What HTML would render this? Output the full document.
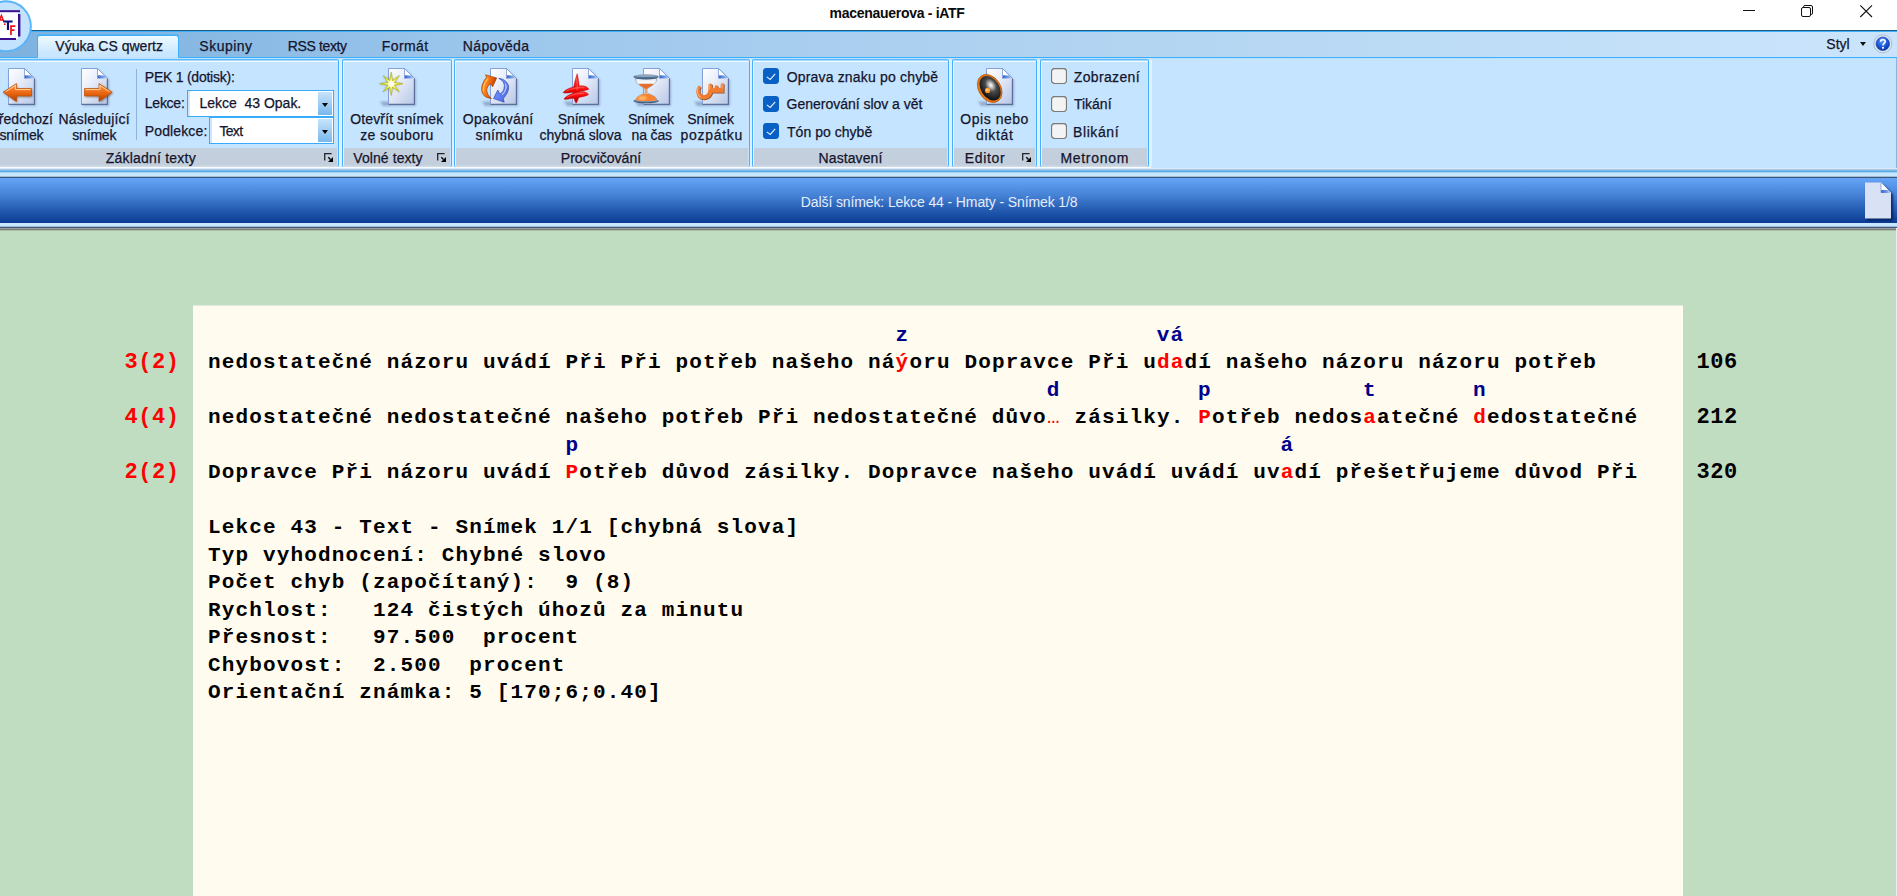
<!DOCTYPE html>
<html lang="cs">
<head>
<meta charset="utf-8">
<title>macenauerova - iATF</title>
<style>
html,body{margin:0;padding:0;}
body{width:1897px;height:896px;overflow:hidden;position:relative;background:#c0ddc1;font-family:"Liberation Sans",sans-serif;font-size:13px;color:#14142c;}
.abs{position:absolute;}
.t{position:absolute;white-space:nowrap;line-height:16px;height:16px;font-size:14px;-webkit-text-stroke:0.25px currentColor;}
.c{text-align:center;}
/* title bar */
#title{left:0;top:0;width:1897px;height:30px;background:#fff;}
/* ribbon */
#l30{left:0;top:30px;width:1897px;height:1px;background:#1d5b86;}
#l31{left:0;top:31px;width:1897px;height:1px;background:#3fb0fb;}
#tabrow{left:0;top:32px;width:1897px;height:25px;background:linear-gradient(90deg,#7db2e0 0px,#86b8e3 180px,#9cc6ec 480px,#acd0f0 900px,#b8d8f3 1300px,#c6e2fa 1700px,#cae4fb 1897px);}
#l57{left:0;top:57px;width:1897px;height:1px;background:#3ab0ff;}
#panel{left:0;top:58px;width:1896px;height:111px;background:#c5e4ff;border-right:1px solid #8db6d8;}
#l58{left:0;top:58px;width:1896px;height:1px;background:#bbe1ff;}
#l167{left:0;top:167px;width:1151px;height:1px;background:#f8fcff;}
#l168{left:0;top:168px;width:1897px;height:1px;background:#d2e9fe;}
#l169{left:0;top:169px;width:1897px;height:1px;background:#b6cbdf;}
#l170{left:0;top:170px;width:1897px;height:1px;background:#7cb6e5;}
#l171{left:0;top:171px;width:1897px;height:1px;background:#5aaee8;}
#l172{left:0;top:172px;width:1897px;height:5px;background:linear-gradient(180deg,#a4d2f6 0,#a4d2f6 1px,#c8e6ff 1px,#c8e6ff 4px,#a2bad2 4px,#a2bad2 5px);}
#l177{left:0;top:177px;width:1897px;height:1px;background:#38587e;}
#bluebar{left:0;top:178px;width:1897px;height:45px;background:linear-gradient(180deg,#66a4f8 0%,#5a98ec 14%,#4480d4 40%,#2e68bc 60%,#1a50a6 82%,#0b3c92 100%);}
#l223{left:0;top:223px;width:1897px;height:4px;background:linear-gradient(180deg,#c8e6ff 0,#c8e6ff 3px,#9cb8d2 3px,#9cb8d2 4px);}
#l227{left:0;top:227px;width:1897px;height:1px;background:#3e5c7c;}
#l228{left:0;top:228px;width:1896px;height:3px;background:linear-gradient(180deg,#989898 0,#989898 1px,#7c7c7c 1px,#7c7c7c 2px,#a9bfa9 2px,#a9bfa9 3px);}
#redge{left:1896px;top:228px;width:1px;height:668px;background:#ececec;}
/* active tab */
#tab{left:37px;top:35px;width:142px;height:23px;border:1px solid #3fb0fb;border-bottom:none;border-radius:3px 3px 0 0;box-sizing:border-box;background:linear-gradient(180deg,#eefaff 0%,#e0f3ff 30%,#cde9ff 70%,#c5e4ff 100%);box-shadow:0 -1px 0 rgba(63,176,251,0.6);}
/* groups */
.grp{position:absolute;top:59px;height:108px;box-sizing:border-box;border:1px solid #44b0ff;border-top-color:#58bcff;border-bottom:none;border-radius:2px;background:#c5e4ff;box-shadow:inset 0 1px 0 #a6d8ff,inset 0 2px 0 #f2f9ff,inset 1px 0 0 #f2f9ff,3px 0 0 #e2f1ff;}
.glab{position:absolute;left:1px;right:1px;top:88px;height:19px;background:linear-gradient(180deg,#c3cfdc 0,#c3cfdc 17px,#d6e0ea 19px);}
.combo{position:absolute;box-sizing:border-box;border:1px solid #36acff;background:#fff;box-shadow:inset 2px 0 0 #cce7ff;}
.dd{position:absolute;right:1px;top:1px;bottom:1px;width:14px;background:linear-gradient(180deg,#c6e3fb 0%,#a4d0f5 45%,#78b8ec 100%);}
.dd i{position:absolute;left:3.5px;top:11px;width:0;height:0;border-left:3.5px solid transparent;border-right:3.5px solid transparent;border-top:4px solid #000;}
/* main */
#cream{left:193px;top:305px;width:1490px;height:591px;background:linear-gradient(180deg,#e0ecd9 0,#e0ecd9 1px,#fffbef 1px,#fffbef 100%);}
.m{position:absolute;white-space:pre;font-family:"Liberation Mono",monospace;font-weight:bold;font-size:21px;line-height:28px;height:28px;color:#000;letter-spacing:1.15px;}
.m.n{font-size:22px;letter-spacing:0.55px;}
.r{color:#ff0000;}
.b{color:#00008b;}
.s{font-family:"Liberation Sans",sans-serif;display:inline-block;width:13.75px;text-align:center;}
</style>
</head>
<body>
<div id="title" class="abs"></div>
<div id="l30" class="abs"></div><div id="l31" class="abs"></div>
<div id="tabrow" class="abs"></div>
<div id="l57" class="abs"></div>
<div id="panel" class="abs"></div><div id="l58" class="abs"></div>
<div id="l167" class="abs"></div><div id="l168" class="abs"></div><div id="l169" class="abs"></div>
<div id="l170" class="abs"></div><div id="l171" class="abs"></div><div id="l172" class="abs"></div><div id="l177" class="abs"></div>
<div id="bluebar" class="abs"></div>
<div id="l223" class="abs"></div><div id="l227" class="abs"></div><div id="l228" class="abs"></div><div id="redge" class="abs"></div>

<!--GROUPS-->
<svg width="0" height="0" style="position:absolute"><defs>
<linearGradient id="pg" x1="0" y1="0" x2="0.9" y2="1"><stop offset="0" stop-color="#ffffff"/><stop offset="0.4" stop-color="#e9eef9"/><stop offset="1" stop-color="#b9c9e8"/></linearGradient>
<linearGradient id="foldb" x1="0" y1="0" x2="1" y2="0"><stop offset="0" stop-color="#2f62cc"/><stop offset="0.6" stop-color="#7aa0e4"/><stop offset="1" stop-color="#c8d8f4"/></linearGradient>
<linearGradient id="fold" x1="0" y1="1" x2="1" y2="0"><stop offset="0" stop-color="#3a6ad0"/><stop offset="0.3" stop-color="#b8ccf0"/><stop offset="0.6" stop-color="#ffffff"/><stop offset="1" stop-color="#ffffff"/></linearGradient>
<linearGradient id="org" x1="0" y1="0" x2="0" y2="1"><stop offset="0" stop-color="#ffa850"/><stop offset="0.3" stop-color="#f87c24"/><stop offset="0.65" stop-color="#e05c0c"/><stop offset="1" stop-color="#a83c00"/></linearGradient>
<linearGradient id="org2" x1="0" y1="0" x2="1" y2="0.3"><stop offset="0" stop-color="#e86010"/><stop offset="0.3" stop-color="#ff8c20"/><stop offset="0.7" stop-color="#e85c08"/><stop offset="1" stop-color="#b03c00"/></linearGradient>
<linearGradient id="blu" x1="0" y1="0" x2="1" y2="1"><stop offset="0" stop-color="#7c98ff"/><stop offset="0.5" stop-color="#6484f4"/><stop offset="1" stop-color="#4460d8"/></linearGradient>
<linearGradient id="redg" x1="0" y1="0" x2="0" y2="1"><stop offset="0" stop-color="#ff4040"/><stop offset="0.5" stop-color="#ff0808"/><stop offset="1" stop-color="#c80000"/></linearGradient>
<radialGradient id="starg" cx="0.5" cy="0.5" r="0.5"><stop offset="0" stop-color="#ffffff"/><stop offset="0.25" stop-color="#ffffb0"/><stop offset="0.6" stop-color="#f4f020"/><stop offset="1" stop-color="#c8c800"/></radialGradient>
<radialGradient id="spk" cx="0.62" cy="0.42" r="0.6"><stop offset="0" stop-color="#ffffff"/><stop offset="0.18" stop-color="#c0c0c0"/><stop offset="0.45" stop-color="#484848"/><stop offset="1" stop-color="#141414"/></radialGradient>
<radialGradient id="helpg" cx="0.45" cy="0.3" r="0.75"><stop offset="0" stop-color="#5a9cf8"/><stop offset="0.5" stop-color="#1c5ce0"/><stop offset="1" stop-color="#0a2c98"/></radialGradient>
<linearGradient id="capg" x1="0" y1="0" x2="0" y2="1"><stop offset="0" stop-color="#8aa0b8"/><stop offset="0.5" stop-color="#5a7898"/><stop offset="1" stop-color="#38587c"/></linearGradient>
<filter id="sh" x="-30%" y="-30%" width="160%" height="160%"><feGaussianBlur stdDeviation="1.1"/></filter>
</defs></svg>
<div id="tab" class="abs"></div>
<div class="grp" style="left:-8px;width:347px"><div class="glab"></div></div>
<div class="t" style="left:105.86px;top:150px;letter-spacing:0.202px;">Základní texty</div>
<svg class="abs" style="left:324px;top:153px" width="10" height="10" viewBox="0 0 10 10"><path d="M0.7 7.4V0.7H7.6" fill="none" stroke="#20242c" stroke-width="1.3"/><path d="M4.3 4.3L6.5 6.5" stroke="#000" stroke-width="1.3"/><path d="M9 4V9H4Z" fill="#000"/></svg>
<div class="grp" style="left:342px;width:110px"><div class="glab"></div></div>
<div class="t" style="left:353.34px;top:150px;letter-spacing:0.073px;">Volné texty</div>
<svg class="abs" style="left:437px;top:153px" width="10" height="10" viewBox="0 0 10 10"><path d="M0.7 7.4V0.7H7.6" fill="none" stroke="#20242c" stroke-width="1.3"/><path d="M4.3 4.3L6.5 6.5" stroke="#000" stroke-width="1.3"/><path d="M9 4V9H4Z" fill="#000"/></svg>
<div class="grp" style="left:454px;width:296px"><div class="glab"></div></div>
<div class="t" style="left:560.85px;top:150px;letter-spacing:0.007px;">Procvičování</div>
<div class="grp" style="left:752px;width:197px"><div class="glab"></div></div>
<div class="t" style="left:818.55px;top:150px;letter-spacing:0.098px;">Nastavení</div>
<div class="grp" style="left:952px;width:85px"><div class="glab"></div></div>
<div class="t" style="left:964.85px;top:150px;letter-spacing:0.662px;">Editor</div>
<svg class="abs" style="left:1022px;top:153px" width="10" height="10" viewBox="0 0 10 10"><path d="M0.7 7.4V0.7H7.6" fill="none" stroke="#20242c" stroke-width="1.3"/><path d="M4.3 4.3L6.5 6.5" stroke="#000" stroke-width="1.3"/><path d="M9 4V9H4Z" fill="#000"/></svg>
<div class="grp" style="left:1040px;width:109px"><div class="glab"></div></div>
<div class="t" style="left:1060.43px;top:150px;letter-spacing:0.700px;">Metronom</div>
<svg class="abs" style="left:-6px;top:62px" width="56" height="52" viewBox="-14 -6 56 52"><path d="M1.5 2H18L28 12V38H1.5Z" fill="#506088" opacity="0.4" filter="url(#sh)"/><path d="M0.5 0.5H16.5L26.5 10.5V36.5H0.5Z" fill="url(#pg)" stroke="#86a0dc" stroke-width="1"/><path d="M26.4 10.5V36.4H0.6" fill="none" stroke="#5c6f9c" stroke-width="1.2"/><path d="M16.5 0.8V10.5H26.2Z" fill="#ffffff"/><path d="M16.5 7.2L23.2 7.4L26.2 10.5H16.5Z" fill="url(#foldb)"/><path d="M16.5 0.5V10.5M16.5 0.5L26.5 10.5" fill="none" stroke="#7c98dc" stroke-width="0.8"/><path transform="translate(0.8,1)" d="M-5 24.2L8.5 15.5V20.5H23.5V27.9H8.5V33.5Z" fill="#4a2400" opacity="0.55" filter="url(#sh)"/><path d="M-5 24.2L8.5 15.5V20.5H23.5V27.9H8.5V33.5Z" fill="url(#org)" stroke="#b85008" stroke-width="0.7"/><path d="M-2.3 23.7L7.6 17.4V21.6H22.6" fill="none" stroke="#ffe0b0" stroke-width="1" opacity="0.85"/></svg>
<svg class="abs" style="left:67px;top:62px" width="56" height="52" viewBox="-14 -6 56 52"><path d="M1.5 2H18L28 12V38H1.5Z" fill="#506088" opacity="0.4" filter="url(#sh)"/><path d="M0.5 0.5H16.5L26.5 10.5V36.5H0.5Z" fill="url(#pg)" stroke="#86a0dc" stroke-width="1"/><path d="M26.4 10.5V36.4H0.6" fill="none" stroke="#5c6f9c" stroke-width="1.2"/><path d="M16.5 0.8V10.5H26.2Z" fill="#ffffff"/><path d="M16.5 7.2L23.2 7.4L26.2 10.5H16.5Z" fill="url(#foldb)"/><path d="M16.5 0.5V10.5M16.5 0.5L26.5 10.5" fill="none" stroke="#7c98dc" stroke-width="0.8"/><path transform="translate(0.8,1)" d="M31.2 24.2L18 15.5V20.5H3.5V27.9H18V33.5Z" fill="#4a2400" opacity="0.55" filter="url(#sh)"/><path d="M31.2 24.2L18 15.5V20.5H3.5V27.9H18V33.5Z" fill="url(#org)" stroke="#b85008" stroke-width="0.7"/><path d="M4.5 21.6H18.9V17.4L28.6 23.7" fill="none" stroke="#ffe0b0" stroke-width="1" opacity="0.85"/></svg>
<div class="t" style="left:-10.65px;top:111px;letter-spacing:0.073px;">Předchozí</div>
<div class="t" style="left:-0.59px;top:127px;letter-spacing:-0.191px;">snímek</div>
<div class="t" style="left:58.45px;top:111px;letter-spacing:0.196px;">Následující</div>
<div class="t" style="left:72.31px;top:127px;letter-spacing:-0.191px;">snímek</div>
<div class="abs" style="left:136px;top:69px;width:1px;height:71px;background:#8fb4dc"></div>
<div class="t" style="left:144.85px;top:69px;letter-spacing:-0.246px;">PEK 1 (dotisk):</div>
<div class="t" style="left:144.85px;top:95px;letter-spacing:-0.264px;">Lekce:</div>
<div class="t" style="left:144.85px;top:123px;letter-spacing:0.118px;">Podlekce:</div>
<div class="combo" style="left:187px;top:90px;width:147px;height:27px"><div class="dd"><i></i></div></div>
<div class="t" style="left:199.45px;top:95px;letter-spacing:-0.009px;white-space:pre;">Lekce  43 Opak.</div>
<div class="combo" style="left:209px;top:117px;width:125px;height:27px"><div class="dd"><i></i></div></div>
<div class="t" style="left:219.48px;top:123px;letter-spacing:-0.700px;">Text</div>
<svg class="abs" style="left:374px;top:62px" width="56" height="52" viewBox="-14 -6 56 52"><path d="M-8 33.5H2V38H-5Z" fill="#4a5a80" opacity="0.4" filter="url(#sh)"/><path d="M1.5 2H18L28 12V38H1.5Z" fill="#506088" opacity="0.4" filter="url(#sh)"/><path d="M0.5 0.5H16.5L26.5 10.5V36.5H0.5Z" fill="url(#pg)" stroke="#86a0dc" stroke-width="1"/><path d="M26.4 10.5V36.4H0.6" fill="none" stroke="#5c6f9c" stroke-width="1.2"/><path d="M16.5 0.8V10.5H26.2Z" fill="#ffffff"/><path d="M16.5 7.2L23.2 7.4L26.2 10.5H16.5Z" fill="url(#foldb)"/><path d="M16.5 0.5V10.5M16.5 0.5L26.5 10.5" fill="none" stroke="#7c98dc" stroke-width="0.8"/><g transform="translate(3.2,15.8)"><path d="M0 -11.8L1.2 -2.9L8.2 -8.2L2.9 -1.2L11.8 0L2.9 1.2L8.2 8.2L1.2 2.9L0 11.8L-1.2 2.9L-8.2 8.2L-2.9 1.2L-11.8 0L-2.9 -1.2L-8.2 -8.2L-1.2 -2.9Z" fill="#3c3c10" opacity="0.55" filter="url(#sh)"/><path d="M0 -11.8L1.3 -3.1L8.2 -8.2L3.1 -1.3L11.8 0L3.1 1.3L8.2 8.2L1.3 3.1L0 11.8L-1.3 3.1L-8.2 8.2L-3.1 1.3L-11.8 0L-3.1 -1.3L-8.2 -8.2L-1.3 -3.1Z" fill="url(#starg)" stroke="#a8a800" stroke-width="0.5"/><circle r="2.6" fill="#fffff0" opacity="0.9"/></g></svg>
<div class="t" style="left:350.14px;top:111px;letter-spacing:0.156px;">Otevřít snímek</div>
<div class="t" style="left:360.13px;top:127px;letter-spacing:0.437px;">ze souboru</div>
<svg class="abs" style="left:475.5px;top:62px" width="56" height="52" viewBox="-14 -6 56 52"><path d="M-8 33.5H2V38H-5Z" fill="#4a5a80" opacity="0.4" filter="url(#sh)"/><path d="M1.5 2H18L28 12V38H1.5Z" fill="#506088" opacity="0.4" filter="url(#sh)"/><path d="M0.5 0.5H16.5L26.5 10.5V36.5H0.5Z" fill="url(#pg)" stroke="#86a0dc" stroke-width="1"/><path d="M26.4 10.5V36.4H0.6" fill="none" stroke="#5c6f9c" stroke-width="1.2"/><path d="M16.5 0.8V10.5H26.2Z" fill="#ffffff"/><path d="M16.5 7.2L23.2 7.4L26.2 10.5H16.5Z" fill="url(#foldb)"/><path d="M16.5 0.5V10.5M16.5 0.5L26.5 10.5" fill="none" stroke="#7c98dc" stroke-width="0.8"/><path d="M1.5 30.5C-3 30 -6 28.5 -7.4 25.5C-9.3 21.5 -8.6 15.5 -3.5 9.3L-4.4 6.8L6.7 9.9L2.6 18.9L0.6 15.7C-2 17.5 -3.4 20 -3.2 22.5C-3 25.5 -1.5 28 1.5 30.5Z" fill="url(#org2)" stroke="#8c3800" stroke-width="0.6"/><path d="M-6.6 23C-7 18.5 -5 14 -2.2 11" fill="none" stroke="#ffc468" stroke-width="1.4" opacity="0.85" stroke-linecap="round"/><path d="M8.7 10.3C11.5 10.6 13.6 11.5 15.1 12.8C17.6 14.8 18.8 17 18.6 19.8C18.5 22.5 17.5 25 15.6 27.6L13.4 30.6L14.2 34.2L3.5 30.5L7.8 22.1L9.9 26.1C12 24.5 13.6 22.8 13.9 20.9C14.3 19 14.5 17.5 14.2 16.3C13.7 14.6 12.8 13.2 11.6 12.2Z" fill="url(#blu)" stroke="#2840a0" stroke-width="0.6"/><path d="M15.6 16C16.6 19.5 15.4 23.5 12.6 26.4" fill="none" stroke="#cfdcff" stroke-width="1.2" opacity="0.85" stroke-linecap="round"/></svg>
<div class="t" style="left:462.64px;top:111px;letter-spacing:0.365px;">Opakování</div>
<div class="t" style="left:475.61px;top:127px;letter-spacing:0.339px;">snímku</div>
<svg class="abs" style="left:558px;top:62px" width="56" height="52" viewBox="-14 -6 56 52"><path d="M-8 33.5H2V38H-5Z" fill="#4a5a80" opacity="0.4" filter="url(#sh)"/><path d="M1.5 2H18L28 12V38H1.5Z" fill="#506088" opacity="0.4" filter="url(#sh)"/><path d="M0.5 0.5H16.5L26.5 10.5V36.5H0.5Z" fill="url(#pg)" stroke="#86a0dc" stroke-width="1"/><path d="M26.4 10.5V36.4H0.6" fill="none" stroke="#5c6f9c" stroke-width="1.2"/><path d="M16.5 0.8V10.5H26.2Z" fill="#ffffff"/><path d="M16.5 7.2L23.2 7.4L26.2 10.5H16.5Z" fill="url(#foldb)"/><path d="M16.5 0.5V10.5M16.5 0.5L26.5 10.5" fill="none" stroke="#7c98dc" stroke-width="0.8"/><g fill="url(#redg)" stroke="#b80000" stroke-width="0.5"><path d="M5.2 5.8C6.6 12 7.5 18 7.3 24C7.1 29.5 5.6 33.5 4.1 35.2C2.6 33.5 1.4 29.5 1.3 24C1.3 18 3.2 12 5.2 5.8Z"/><path d="M-9 24.6C-6 20.5 4 17.5 10 17.8C13.5 18 16 19.4 16.8 21.2C12 23.4 4 23.6 -1 24.4C-4 25 -7 25.4 -9 24.6Z"/><path d="M-8.1 31C-5 26.8 4 23.6 10 23.6C13.4 23.7 15.8 25 16.5 26.7C12 29.2 4 29.6 -1 30.6C-4 31.2 -6.5 31.6 -8.1 31Z"/></g><path d="M-5.5 23C-1 20.5 6 19.3 11.5 19.6M-4.8 29.3C0 26.6 6 25.3 11.2 25.4M4.6 10C5.2 15 5.4 19 5.2 22" fill="none" stroke="#ff7070" stroke-width="0.9" opacity="0.75" stroke-linecap="round"/></svg>
<div class="t" style="left:557.86px;top:111px;letter-spacing:-0.169px;">Snímek</div>
<div class="t" style="left:539.41px;top:127px;letter-spacing:0.034px;">chybná slova</div>
<svg class="abs" style="left:629.3px;top:62px" width="56" height="52" viewBox="-14 -6 56 52"><path d="M-8 33.5H2V38H-5Z" fill="#4a5a80" opacity="0.4" filter="url(#sh)"/><path d="M1.5 2H18L28 12V38H1.5Z" fill="#506088" opacity="0.4" filter="url(#sh)"/><path d="M0.5 0.5H16.5L26.5 10.5V36.5H0.5Z" fill="url(#pg)" stroke="#86a0dc" stroke-width="1"/><path d="M26.4 10.5V36.4H0.6" fill="none" stroke="#5c6f9c" stroke-width="1.2"/><path d="M16.5 0.8V10.5H26.2Z" fill="#ffffff"/><path d="M16.5 7.2L23.2 7.4L26.2 10.5H16.5Z" fill="url(#foldb)"/><path d="M16.5 0.5V10.5M16.5 0.5L26.5 10.5" fill="none" stroke="#7c98dc" stroke-width="0.8"/><ellipse cx="3.1" cy="33" rx="12.7" ry="2.3" fill="url(#capg)"/><path d="M-7.5 10.5C-7.5 16.5 0.2 18.6 2.1 21V24.5C0.2 26.5 -7.3 28.2 -7.3 32.2C-4 33.6 10.5 33.6 13.9 32.2C13.9 28.2 6 26.5 4 24.5V21C6 18.6 13.9 16.5 13.9 10.5Z" fill="#e4e7ee" fill-opacity="0.9" stroke="#8a94a4" stroke-width="0.7"/><path d="M-6.6 12.6H13C12.6 14 12 15 11 15.9H-4.6C-5.6 15 -6.2 14 -6.6 12.6Z" fill="#f6f7fa" opacity="0.9"/><path d="M-4.3 15.7H10.6C9 18.3 5.2 19.4 3.7 20.9H2.4C0.9 19.4 -2.8 18.3 -4.3 15.7Z" fill="#e46c2c"/><path d="M2.4 20.5H3.7V26.5H2.4Z" fill="#f09050"/><path d="M-7 32C-7 28.6 -1.5 26 3.1 25.8C7.6 26 13.6 28.6 13.6 32C10 33.4 -3.6 33.4 -7 32Z" fill="#f8822e"/><ellipse cx="-0.6" cy="30" rx="4.4" ry="1.8" fill="#ffc878" opacity="0.9" filter="url(#sh)"/><ellipse cx="3.05" cy="8.85" rx="12.7" ry="2.6" fill="url(#capg)"/><ellipse cx="3.05" cy="8" rx="11.2" ry="1.1" fill="#9cb0c6" opacity="0.8"/></svg>
<div class="t" style="left:627.96px;top:111px;letter-spacing:-0.289px;">Snímek</div>
<div class="t" style="left:631.47px;top:127px;letter-spacing:-0.122px;">na čas</div>
<svg class="abs" style="left:688.2px;top:62px" width="56" height="52" viewBox="-14 -6 56 52"><path d="M-8 33.5H2V38H-5Z" fill="#4a5a80" opacity="0.4" filter="url(#sh)"/><path d="M1.5 2H18L28 12V38H1.5Z" fill="#506088" opacity="0.4" filter="url(#sh)"/><path d="M0.5 0.5H16.5L26.5 10.5V36.5H0.5Z" fill="url(#pg)" stroke="#86a0dc" stroke-width="1"/><path d="M26.4 10.5V36.4H0.6" fill="none" stroke="#5c6f9c" stroke-width="1.2"/><path d="M16.5 0.8V10.5H26.2Z" fill="#ffffff"/><path d="M16.5 7.2L23.2 7.4L26.2 10.5H16.5Z" fill="url(#foldb)"/><path d="M16.5 0.5V10.5M16.5 0.5L26.5 10.5" fill="none" stroke="#7c98dc" stroke-width="0.8"/><path transform="translate(0.7,0.8)" d="M-3.4 17.6C-6.5 21 -6.5 27 -3 30C0 32.3 5 31.8 8 29C9.5 27.5 10 26 10.3 24.8L21.8 24.8L22 15.8C21 15 19.5 15 18.8 15.8L18.6 19.5C18 20.3 16.6 20.3 16.2 19.5L16 18C15 17 13.5 17 12.8 18L12.6 19.8C12 20.5 10.8 20.5 10.4 19.8L10.2 16.2C9 15.2 7.5 15.2 6.5 16.2L6.3 22C6.3 24.5 5 26.5 3 27C0.5 27.5 -1.6 26 -2 23.5C-2.2 21.5 -1.5 20 -0.8 19Z" fill="#7a3000" opacity="0.8"/><path d="M-3.4 17.6C-6.5 21 -6.5 27 -3 30C0 32.3 5 31.8 8 29C9.5 27.5 10 26 10.3 24.8L21.8 24.8L22 15.8C21 15 19.5 15 18.8 15.8L18.6 19.5C18 20.3 16.6 20.3 16.2 19.5L16 18C15 17 13.5 17 12.8 18L12.6 19.8C12 20.5 10.8 20.5 10.4 19.8L10.2 16.2C9 15.2 7.5 15.2 6.5 16.2L6.3 22C6.3 24.5 5 26.5 3 27C0.5 27.5 -1.6 26 -2 23.5C-2.2 21.5 -1.5 20 -0.8 19Z" fill="#f07c30"/><path d="M-4 19.5C-5.5 23 -4.5 27.5 -1.5 29.2M7.6 16.5V21M20 16.2V20" fill="none" stroke="#ffb078" stroke-width="1.1" opacity="0.8" stroke-linecap="round"/></svg>
<div class="t" style="left:687.36px;top:111px;letter-spacing:-0.169px;">Snímek</div>
<div class="t" style="left:680.55px;top:127px;letter-spacing:0.700px;">pozpátku</div>
<svg class="abs" style="left:763px;top:68px" width="16" height="16" viewBox="0 0 16 16"><rect x="0" y="0" width="16" height="16" rx="3.4" fill="#0860c4"/><path d="M3.8 8.9L7.2 11.4L12.2 5.8" fill="none" stroke="#e6f0fc" stroke-width="1.15"/></svg>
<div class="t" style="left:786.64px;top:69px;letter-spacing:0.181px;">Oprava znaku po chybě</div>
<svg class="abs" style="left:763px;top:95.5px" width="16" height="16" viewBox="0 0 16 16"><rect x="0" y="0" width="16" height="16" rx="3.4" fill="#0860c4"/><path d="M3.8 8.9L7.2 11.4L12.2 5.8" fill="none" stroke="#e6f0fc" stroke-width="1.15"/></svg>
<div class="t" style="left:786.60px;top:96px;letter-spacing:-0.019px;">Generování slov a vět</div>
<svg class="abs" style="left:763px;top:123px" width="16" height="16" viewBox="0 0 16 16"><rect x="0" y="0" width="16" height="16" rx="3.4" fill="#0860c4"/><path d="M3.8 8.9L7.2 11.4L12.2 5.8" fill="none" stroke="#e6f0fc" stroke-width="1.15"/></svg>
<div class="t" style="left:786.99px;top:124px;letter-spacing:0.037px;">Tón po chybě</div>
<svg class="abs" style="left:972px;top:62px" width="56" height="52" viewBox="-14 -6 56 52"><path d="M-8 33.5H2V38H-5Z" fill="#4a5a80" opacity="0.4" filter="url(#sh)"/><path d="M1.5 2H18L28 12V38H1.5Z" fill="#506088" opacity="0.4" filter="url(#sh)"/><path d="M0.5 0.5H16.5L26.5 10.5V36.5H0.5Z" fill="url(#pg)" stroke="#86a0dc" stroke-width="1"/><path d="M26.4 10.5V36.4H0.6" fill="none" stroke="#5c6f9c" stroke-width="1.2"/><path d="M16.5 0.8V10.5H26.2Z" fill="#ffffff"/><path d="M16.5 7.2L23.2 7.4L26.2 10.5H16.5Z" fill="url(#foldb)"/><path d="M16.5 0.5V10.5M16.5 0.5L26.5 10.5" fill="none" stroke="#7c98dc" stroke-width="0.8"/><g transform="translate(3.7,20.5) rotate(-33)"><ellipse cx="0" cy="0" rx="11" ry="15.2" fill="#e87818" stroke="#a85000" stroke-width="0.6"/><ellipse cx="0.5" cy="0" rx="9.2" ry="13.4" fill="url(#spk)"/></g><circle cx="1.6" cy="22.4" r="2.6" fill="#ff9a28"/><circle cx="1.2" cy="21.9" r="1.2" fill="#ffd080"/></svg>
<div class="t" style="left:960.34px;top:111px;letter-spacing:0.529px;">Opis nebo</div>
<div class="t" style="left:975.98px;top:127px;letter-spacing:0.700px;">diktát</div>
<svg class="abs" style="left:1051px;top:68px" width="16" height="16" viewBox="0 0 16 16"><rect x="0.5" y="0.5" width="15" height="15" rx="3.2" fill="#f3f3f3" stroke="#7a7a7a" stroke-width="1.25"/></svg>
<div class="t" style="left:1073.76px;top:69px;letter-spacing:0.347px;">Zobrazení</div>
<svg class="abs" style="left:1051px;top:95.5px" width="16" height="16" viewBox="0 0 16 16"><rect x="0.5" y="0.5" width="15" height="15" rx="3.2" fill="#f3f3f3" stroke="#7a7a7a" stroke-width="1.25"/></svg>
<div class="t" style="left:1073.89px;top:96px;letter-spacing:0.012px;">Tikání</div>
<svg class="abs" style="left:1051px;top:123px" width="16" height="16" viewBox="0 0 16 16"><rect x="0.5" y="0.5" width="15" height="15" rx="3.2" fill="#f3f3f3" stroke="#7a7a7a" stroke-width="1.25"/></svg>
<div class="t" style="left:1073.05px;top:124px;letter-spacing:0.583px;">Blikání</div>
<div class="t" style="left:55.34px;top:38px;letter-spacing:0.020px;">Výuka CS qwertz</div>
<div class="t" style="left:199.36px;top:38px;letter-spacing:0.476px;">Skupiny</div>
<div class="t" style="left:287.85px;top:38px;letter-spacing:-0.383px;">RSS texty</div>
<div class="t" style="left:381.85px;top:38px;letter-spacing:0.383px;">Formát</div>
<div class="t" style="left:462.85px;top:38px;letter-spacing:0.332px;">Nápověda</div>
<div class="t" style="left:1826.36px;top:36px;letter-spacing:-0.022px;">Styl</div>
<div class="abs" style="left:1860px;top:42px;width:0;height:0;border-left:3.5px solid transparent;border-right:3.5px solid transparent;border-top:4px solid #111"></div>
<svg class="abs" style="left:1873px;top:34px" width="20" height="20" viewBox="0 0 20 20"><circle cx="9.8" cy="9.8" r="9" fill="#dfe9f6" stroke="#9ab0d0" stroke-width="0.8"/><circle cx="9.8" cy="9.8" r="6.8" fill="url(#helpg)" stroke="#1838a0" stroke-width="0.6"/><path d="M7.6 7.8C7.6 4.9 12.2 4.9 12.2 7.6C12.2 9.4 10 9.5 10 11.5" fill="none" stroke="#fff" stroke-width="1.7"/><circle cx="10" cy="13.8" r="1.1" fill="#fff"/></svg>
<div class="t" style="left:829.58px;top:5px;letter-spacing:-0.292px;color:#0a0a0a;font-weight:bold;-webkit-text-stroke:0;">macenauerova - iATF</div>
<svg class="abs" style="left:1735px;top:0" width="150" height="30" viewBox="0 0 150 30" fill="none" stroke="#111" stroke-width="1"><path d="M8 10.5H20"/><rect x="66.5" y="7.5" width="9" height="9" rx="1.5"/><path d="M68.5 7.5V6.8Q68.5 5.5 70 5.5H76Q77.5 5.5 77.5 7V13Q77.5 14.5 76.2 14.5H75.5"/><path d="M125.3 5.3L137 17M137 5.3L125.3 17" stroke-width="1.1"/></svg>
<div class="t" style="left:800.85px;top:194px;letter-spacing:-0.117px;color:#e6edfb;-webkit-text-stroke:0;">Další snímek: Lekce 44 - Hmaty - Snímek 1/8</div>
<svg class="abs" style="left:1861px;top:179px" width="36" height="44" viewBox="-4 -3.5 36 44"><path d="M1.5 2H17.5L28 12V38H1.5Z" fill="#041a54" opacity="0.85" filter="url(#sh)"/><path d="M0 0H16L26 10.4V36H0Z" fill="#d8e2f4"/><path d="M16 0V10.4H26Z" fill="#ffffff"/><path d="M16 7.4L23.2 7.6L26 10.4H16Z" fill="url(#foldb)"/><path d="M16 0.3V10.2" stroke="#7c98d8" stroke-width="0.8"/></svg>
<svg class="abs" style="left:0;top:0" width="40" height="58" viewBox="0 0 40 58"><circle cx="6" cy="26.2" r="24.9" fill="#c3e2fe" stroke="#58b4f8" stroke-width="1.9"/><rect x="-2" y="12" width="20" height="27" fill="#fff"/><path d="M-2 11.2H20" stroke="#3a108c" stroke-width="2"/><path d="M19.2 14V36.5" stroke="#3a108c" stroke-width="2.4"/><path d="M-2 39H16" stroke="#3a108c" stroke-width="2"/><path d="M-1.2 22L1.4 15.5L4 22M-0.3 20H3.2" fill="none" stroke="#f01018" stroke-width="1.5"/><path d="M3.5 21.5H12.6M8 21.5V30" fill="none" stroke="#0a0a78" stroke-width="2.2"/><path d="M11 35V26.2H15.4M11 30.2H14.4" fill="none" stroke="#f01018" stroke-width="1.7"/><circle cx="4.8" cy="24.2" r="0.9" fill="#f01018"/></svg>
<!--MAIN-->
<div id="cream" class="abs"></div>
<!--MAINTEXT-->
<div class="m b" style="left:895.5px;top:322px">z</div>
<div class="m b" style="left:1156.75px;top:322px">vá</div>
<div class="m " style="left:208px;top:349px">nedostatečné názoru uvádí Při Při potřeb našeho ná<span class="r">ý</span>oru Dopravce Při u<span class="r">d</span><span class="r">a</span>dí našeho názoru názoru potřeb</div>
<div class="m b" style="left:1046.75px;top:377px">d</div>
<div class="m b" style="left:1198.0px;top:377px">p</div>
<div class="m b" style="left:1363.0px;top:377px">t</div>
<div class="m b" style="left:1473.0px;top:377px">n</div>
<div class="m " style="left:208px;top:404px">nedostatečné nedostatečné našeho potřeb Při nedostatečné důvo<span class="r" style="font-weight:normal">…</span> zásilky. <span class="r">P</span>otřeb nedos<span class="r">a</span>atečné <span class="r">d</span>edostatečné</div>
<div class="m b" style="left:565.5px;top:432px">p</div>
<div class="m b" style="left:1280.5px;top:432px">á</div>
<div class="m " style="left:208px;top:459px">Dopravce Při názoru uvádí <span class="r">P</span>otřeb důvod zásilky. Dopravce našeho uvádí uvádí uv<span class="r">a</span>dí přešetřujeme důvod Při</div>
<div class="m r n" style="left:124.5px;top:349px">3(2)</div>
<div class="m n" style="left:1696.5px;top:349px">106</div>
<div class="m r n" style="left:124.5px;top:404px">4(4)</div>
<div class="m n" style="left:1696.5px;top:404px">212</div>
<div class="m r n" style="left:124.5px;top:459px">2(2)</div>
<div class="m n" style="left:1696.5px;top:459px">320</div>
<div class="m " style="left:208px;top:514px">Lekce 43 - Text - Snímek 1/1 [chybná slova]</div>
<div class="m " style="left:208px;top:542px">Typ vyhodnocení: Chybné slovo</div>
<div class="m " style="left:208px;top:569px">Počet chyb (započítaný):  9 (8)</div>
<div class="m " style="left:208px;top:597px">Rychlost:   124 čistých úhozů za minutu</div>
<div class="m " style="left:208px;top:624px">Přesnost:   97.500  procent</div>
<div class="m " style="left:208px;top:652px">Chybovost:  2.500  procent</div>
<div class="m " style="left:208px;top:679px">Orientační známka: 5 [170;6;0.40]</div>
<!--/MAINTEXT-->
</body>
</html>
